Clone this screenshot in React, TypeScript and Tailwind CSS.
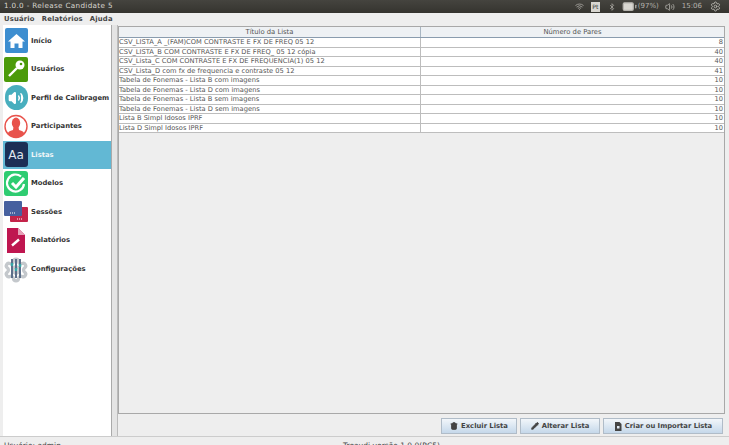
import { ReactNode } from "react";
import { Pencil, Trash2, Volume2, Settings, BatteryMedium, Wifi, Bluetooth } from "lucide-react";

const rows = [
  ["CSV_LISTA_A _(FAM)COM CONTRASTE E FX DE FREQ 05 12", 8],
  ["CSV_LISTA_B COM CONTRASTE E FX DE FREQ_ 05 12 cópia", 40],
  ["CSV_Lista_C COM CONTRASTE E FX DE FREQUENCIA(1) 05 12", 40],
  ["CSV_Lista_D com fx de frequencia e contraste 05 12", 41],
  ["Tabela de Fonemas - Lista B com imagens", 10],
  ["Tabela de Fonemas - Lista D com imagens", 10],
  ["Tabela de Fonemas - Lista B sem imagens", 10],
  ["Tabela de Fonemas - Lista D sem imagens", 10],
  ["Lista B Simpl Idosos IPRF", 10],
  ["Lista D Simpl Idosos IPRF", 10],
] as const;

const IconBox = ({ className, children }: { className: string; children: ReactNode }) => (
  <div className={`w-[23px] h-[25px] flex items-center justify-center ${className}`}>{children}</div>
);

const HomeIcon = () => (
  <svg width="23" height="25" viewBox="0 0 23 25">
    <rect width="23" height="25" rx="2" fill="#3d8ed0" />
    <path d="M11.5 6 L20 13.5 H17.5 V20 H13.5 V15.5 H9.5 V20 H5.5 V13.5 H3 Z" fill="#fff" />
  </svg>
);

const KeyIcon = () => (
  <svg width="24" height="25" viewBox="0 0 24 25">
    <rect width="24" height="25" rx="2" fill="#4b9a0a" />
    <circle cx="16" cy="8" r="4.5" fill="#fff" />
    <circle cx="17" cy="7" r="1.3" fill="#4b9a0a" />
    <path d="M13 11 L5 19" stroke="#fff" strokeWidth="2.4" />
  </svg>
);

const PersonIcon = () => (
  <svg width="24" height="25" viewBox="0 0 24 25">
    <circle cx="12" cy="12.5" r="11" fill="#fff" stroke="#e8534c" strokeWidth="1.4" />
    <ellipse cx="12" cy="9" rx="4.2" ry="5.4" fill="#e8534c" />
    <path d="M9.5 13 L14.5 13 L15 16 Q20 17 20.5 20 Q17 23.5 12 23.5 Q7 23.5 3.5 20 Q4 17 9 16 Z" fill="#e8534c" />
  </svg>
);

const CheckIcon = () => (
  <svg width="24" height="25" viewBox="0 0 24 25">
    <rect width="24" height="25" rx="3" fill="#2ecc71" />
    <path d="M17 5.5 A8.5 8.5 0 1 0 20 13" fill="none" stroke="#fff" strokeWidth="2.2" />
    <path d="M8 12 L12 16 L20 7" fill="none" stroke="#fff" strokeWidth="3" />
  </svg>
);

const SessionsIcon = () => (
  <svg width="24" height="21" viewBox="0 0 24 21">
    <rect x="6" y="6" width="18" height="15" rx="1" fill="#c4244a" />
    <rect x="0" y="0" width="18" height="15" rx="1" fill="#46609f" />
    <path d="M6 12 h5 M13 18 h5" stroke="#fff" strokeWidth="1.2" strokeDasharray="1 1" />
  </svg>
);

const ReportIcon = () => (
  <svg width="24" height="25" viewBox="0 0 24 25">
    <path d="M3 0 H14 L21 7 V25 H3 Z" fill="#bf1650" />
    <path d="M14 0 L21 7 H14 Z" fill="#e6a0b8" />
    <path d="M8 17.5 L15 11.5" stroke="#fff" strokeWidth="2.4" />
  </svg>
);

const GearsIcon = () => (
  <div className="relative w-[24px] h-[25px]">
    <Settings className="absolute left-[-1px] top-[1px] text-[#c4c8cc]" size={26} strokeWidth={3} />
    <svg className="absolute left-0 top-0" width="24" height="25" viewBox="0 0 24 25">
      <path d="M8 3 V22 M12 3 V22 M16 3 V22" stroke="#5c6f8a" strokeWidth="2" />
      <path d="M8 7 V10 M12 12 V15 M16 8 V11" stroke="#35a6a6" strokeWidth="2.4" />
    </svg>
  </div>
);

// small filled page used on the import button
const PageIcon = () => (
  <svg width="8" height="9" viewBox="0 0 8 9">
    <path d="M1 0 H5.5 L7.5 2 V9 H1 Z" fill="#444" />
    <rect x="3" y="4" width="2.5" height="2.5" fill="#dfe9f3" />
  </svg>
);

const menu: { label: string; icon: ReactNode; active?: boolean }[] = [
  { label: "Início", icon: <HomeIcon /> },
  { label: "Usuários", icon: <KeyIcon /> },
  { label: "Perfil de Calibragem", icon: <IconBox className="bg-[#48aebe] rounded-full"><Volume2 size={16} className="text-white fill-white" /></IconBox> },
  { label: "Participantes", icon: <PersonIcon /> },
  { label: "Listas", active: true, icon: <IconBox className="bg-[#1c2f55] rounded-[3px] text-[#dfe6ee] text-[12px] font-normal">Aa</IconBox> },
  { label: "Modelos", icon: <CheckIcon /> },
  { label: "Sessões", icon: <SessionsIcon /> },
  { label: "Relatórios", icon: <ReportIcon /> },
  { label: "Configurações", icon: <GearsIcon /> },
];

const ActionButton = ({ icon, label, className }: { icon: ReactNode; label: string; className: string }) => (
  <button className={`h-[16px] flex items-center justify-center gap-[3px] border border-[#b0bcc8] bg-gradient-to-b from-[#f2f6fa] to-[#c5d8ea] text-[6.8px] font-bold text-[#444] ${className}`}>
    {icon}
    {label}
  </button>
);

export default function App() {
  return (
    <div className="w-[729px] h-[445px] overflow-hidden bg-[#eeeeee] flex flex-col font-['DejaVu_Sans',sans-serif] text-[6.8px] text-[#444]">
      <div className="h-[13px] shrink-0 bg-gradient-to-b from-[#45443f] to-[#35342f] flex items-center pl-[4px] pr-[8px] text-[#d8d6d0]">
        <span className="text-[7.2px] tracking-[0.35px]">1.0.0 - Release Candidate 5</span>
        <div className="ml-auto flex items-center text-[7px] text-[#b5b3ad]">
          <Wifi size={9} className="mr-[7px]" />
          <span className="w-[9px] h-[10px] bg-[#d8d6d0] text-[#333] text-[6px] text-center leading-[10px] mr-[8px]">Pt</span>
          <Bluetooth size={8} className="mr-[6px]" />
          <BatteryMedium size={15} className="mr-[1px] fill-[#d8d6d0]" />
          <span className="mr-[6px]">(97%)</span>
          <Volume2 size={10} className="mr-[7px]" />
          <span className="mr-[8px]">15:06</span>
          <Settings size={11} />
        </div>
      </div>

      <div className="h-[12px] shrink-0 flex items-center gap-[7px] pl-[4px] font-bold text-[#444] tracking-[0.2px]">
        <span>Usuário</span>
        <span>Relatórios</span>
        <span>Ajuda</span>
      </div>

      <div className="flex h-[411px] shrink-0 pl-[3px]">
        <div className="w-[109px] shrink-0 bg-white border-r border-[#aaa] pt-[1.5px]">
          {menu.map((item) => (
            <div key={item.label} className={`h-[28.5px] flex items-center gap-[3px] pl-[1px] font-bold whitespace-nowrap ${item.active ? "bg-[#62b8d4] text-[#f0f6f8]" : "text-[#333]"}`}>
              <div className="w-[24px] flex justify-center shrink-0">{item.icon}</div>
              <span>{item.label}</span>
            </div>
          ))}
        </div>

        <div className="w-[6px] shrink-0 bg-[#e4e4e4] border-r border-[#bbb]" />

        <div className="flex-1 flex flex-col pr-[4px]">
          <div className="h-[388px] shrink-0 border border-[#a8a8a8] bg-[#eeeeee] mt-px">
            <div className="flex h-[11px] border-b border-[#8a9cae] bg-[#eef1f4] text-[#555] text-center leading-[11px]">
              <div className="w-[302px] border-r border-[#a9b6c2]">Título da Lista</div>
              <div className="flex-1">Número de Pares</div>
            </div>
            {rows.map(([title, pairs]) => (
              <div key={title} className="flex h-[9.5px] bg-white border-b border-[#bdbdbd] leading-[9px] text-[6.7px] text-[#555]">
                <div className="w-[302px] border-r border-[#bdbdbd] whitespace-nowrap overflow-hidden">{title}</div>
                <div className="flex-1 text-right pr-px">{pairs}</div>
              </div>
            ))}
          </div>

          <div className="flex justify-end gap-[3px] mt-[4px] pr-[2px]">
            <ActionButton className="w-[76px]" label="Excluir Lista" icon={<Trash2 size={8} strokeWidth={3} className="fill-[#444]" />} />
            <ActionButton className="w-[80px]" label="Alterar Lista" icon={<Pencil size={8} strokeWidth={3} className="fill-[#444]" />} />
            <ActionButton className="w-[120px]" label="Criar ou Importar Lista" icon={<PageIcon />} />
          </div>
        </div>
      </div>

      <div className="flex-1 relative border-t border-[#ccc] pl-[4px] pt-[3px] leading-[11px] text-[7.5px] text-[#444] bg-[#eeeeee]">
        <span>Usuário: admin</span>
        <span className="absolute left-[343px] top-[3px]">Treaudi versão 1.0.0(RC5)</span>
      </div>
    </div>
  );
}
